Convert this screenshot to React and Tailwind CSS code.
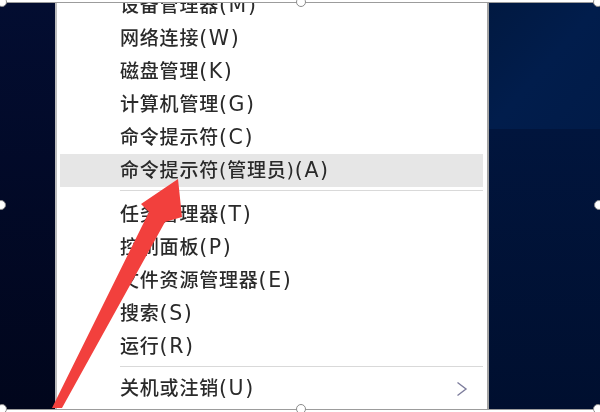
import React from "react";

const top = [
  ["设备管理器", "(M)"],
  ["网络连接", "(W)"],
  ["磁盘管理", "(K)"],
  ["计算机管理", "(G)"],
  ["命令提示符", "(C)"],
];
const mid = [
  ["任务管理器", "(T)"],
  ["控制面板", "(P)"],
  ["文件资源管理器", "(E)"],
  ["搜索", "(S)"],
  ["运行", "(R)"],
];

function Label({ zh, key2 }) {
  return (
    <span className="whitespace-nowrap leading-none text-[19px] font-medium tracking-[0.8px] text-[#2a2a2a] blur-[0.35px]">
      {zh}
      <span className="text-[20.5px] font-normal tracking-[1.6px]">{key2}</span>
    </span>
  );
}

function Item({ zh, k }) {
  return (
    <div className="h-[33px] flex items-center pl-[63px]">
      <Label zh={zh} key2={k} />
    </div>
  );
}

function Handle({ cls }) {
  return (
    <div
      className={
        "absolute w-[10px] h-[10px] rounded-full bg-white border border-[#8c8c8c] -translate-x-1/2 -translate-y-1/2 " +
        cls
      }
    />
  );
}

export default function App() {
  return (
    <div
      className="relative w-[600px] h-[412px] bg-white overflow-hidden"
      style={{ fontFamily: '"DejaVu Sans", "Noto Sans CJK SC", sans-serif' }}
    >
      <div className="pt-[2px]">
        <div className="h-[408px] border-y border-[#9c9c9c] flex">
          <div className="w-[55px] bg-gradient-to-b from-[#030d31] to-[#01061c]" />
          <div className="w-[2px] bg-[#bdbdbd]" />
          <div className="w-[430px] bg-white overflow-hidden">
            <div className="-mt-[14px] flex flex-col">
              {top.map(([zh, k]) => (
                <Item key={zh} zh={zh} k={k} />
              ))}
              <div className="h-[33px] ml-[3px] mr-[4px] pl-[60px] bg-[#e6e6e6] flex items-center">
                <Label zh="命令提示符(管理员)" key2="(A)" />
              </div>
              <div className="pt-[3px] pb-[7px] ml-[63px] mr-[4px]">
                <div className="h-[1px] bg-[#d9d9d9]" />
              </div>
              {mid.map(([zh, k]) => (
                <Item key={zh} zh={zh} k={k} />
              ))}
              <div className="pt-[3px] pb-[5px] ml-[63px] mr-[4px]">
                <div className="h-[1px] bg-[#d9d9d9]" />
              </div>
              <div className="h-[33px] flex items-center justify-between pl-[63px] pr-[19px]">
                <Label zh="关机或注销" key2="(U)" />
                <svg width="12" height="16" viewBox="0 0 12 16">
                  <polyline
                    points="1.5,1.5 10,8 1.5,14.5"
                    fill="none"
                    stroke="#7d7d9c"
                    strokeWidth="1.4"
                  />
                </svg>
              </div>
            </div>
          </div>
          <div className="w-[2px] bg-[#a3a3a3]" />
          <div className="flex-1 flex flex-col">
            <div className="h-[126px] bg-gradient-to-br from-[#011941] via-[#011d4c] to-[#011b48]" />
            <div className="flex-1 bg-gradient-to-b from-[#01153d] to-[#000f2f]" />
          </div>
        </div>
      </div>

      <svg
        className="absolute left-0 top-0 pointer-events-none"
        width="600"
        height="412"
        viewBox="0 0 600 412"
      >
        <polygon
          points="178,179 182,217 165,222 62,408 52,408 149,212 141,204"
          fill="#f2403d"
        />
      </svg>

      <Handle cls="left-[2px] top-[2px]" />
      <Handle cls="left-[301px] top-[2px]" />
      <Handle cls="left-[598px] top-[2px]" />
      <Handle cls="left-[1px] top-[205px]" />
      <Handle cls="left-[599px] top-[205px]" />
      <Handle cls="left-[2px] top-[409px]" />
      <Handle cls="left-[301px] top-[409px]" />
      <Handle cls="left-[598px] top-[409px]" />
    </div>
  );
}
